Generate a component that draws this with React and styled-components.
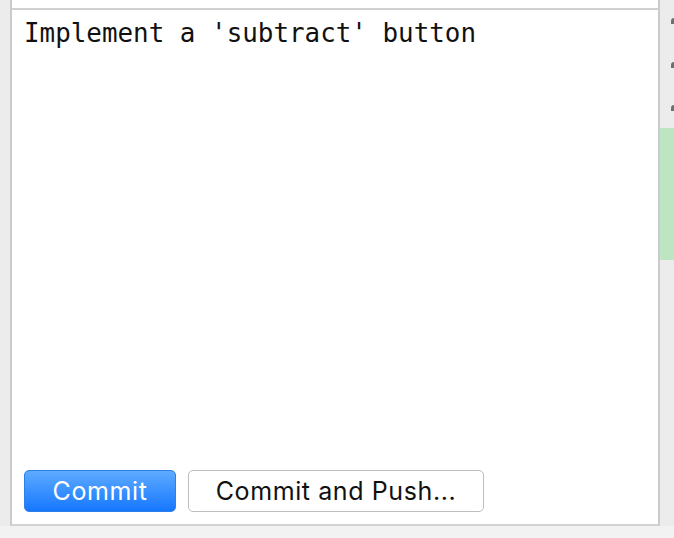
import React from "react";
import styled, { createGlobalStyle } from "styled-components";

const Global = createGlobalStyle`
  html, body { margin: 0; padding: 0; background: #f2f2f2; }
  #root { width: 674px; height: 538px; overflow: hidden; }
`;

const Window = styled.div`
  width: 674px;
  height: 538px;
  display: flex;
  flex-direction: column;
  background: #f2f2f2;
`;

const Main = styled.div`
  flex: 1;
  display: flex;
  min-height: 0;
`;

const Gutter = styled.div`
  width: 10px;
  background: #ececec;
`;

const Panel = styled.div`
  flex: 1;
  display: flex;
  flex-direction: column;
  background: #fff;
  border-left: 2px solid #cbcbcb;
  border-right: 2px solid #cbcbcb;
  border-bottom: 2px solid #d2d2d2;
`;

const TopStrip = styled.div`
  height: 8px;
  background: #fff;
  border-bottom: 2px solid #d0d0d0;
`;

const Editor = styled.div`
  flex: 1;
  padding: 8px 12px;
  font-family: "DejaVu Sans Mono", "Liberation Mono", monospace;
  font-size: 25.9px;
  line-height: 31px;
  color: #111;
  white-space: pre;
`;

const ButtonRow = styled.div`
  display: flex;
  gap: 12px;
  padding: 0 12px 12px 12px;
`;

const Button = styled.button`
  height: 42px;
  width: ${(p) => p.$w}px;
  box-sizing: border-box;
  border-radius: 5px;
  font-family: Inter, "Liberation Sans", sans-serif;
  font-size: 25px;
  letter-spacing: 0.6px;
  padding: 0;
  display: flex;
  align-items: center;
  justify-content: center;
  cursor: default;
  color: ${(p) => (p.$primary ? "#fff" : "#111")};
  background: ${(p) =>
    p.$primary ? "linear-gradient(#5eabff, #1677ff)" : "#fff"};
  border: 1px solid ${(p) => (p.$primary ? "#2f7fe8" : "#bdbdbd")};
`;

const SideStrip = styled.div`
  width: 14px;
  background: #ececec;
  display: flex;
  flex-direction: column;
  padding-top: 18px;
`;

const Marks = styled.div`
  display: flex;
  flex-direction: column;
  gap: 37.5px;
`;

const Mark = styled.div`
  width: 3px;
  height: 6px;
  margin-left: 11px;
  background: #6f6f6f;
  border-top-left-radius: 3px;
`;

const Changed = styled.div`
  margin-top: 17px;
  height: 132px;
  background: #bde5c1;
`;

const StatusBar = styled.div`
  height: 12px;
  background: #f2f2f2;
`;

export default function App() {
  return (
    <>
      <Global />
      <Window>
        <Main>
          <Gutter />
          <Panel>
            <TopStrip />
            <Editor>Implement a 'subtract' button</Editor>
            <ButtonRow>
              <Button $primary $w={152}>Commit</Button>
              <Button $w={296}>Commit and Push...</Button>
            </ButtonRow>
          </Panel>
          <SideStrip>
            <Marks>
              <Mark />
              <Mark />
              <Mark />
            </Marks>
            <Changed />
          </SideStrip>
        </Main>
        <StatusBar />
      </Window>
    </>
  );
}
